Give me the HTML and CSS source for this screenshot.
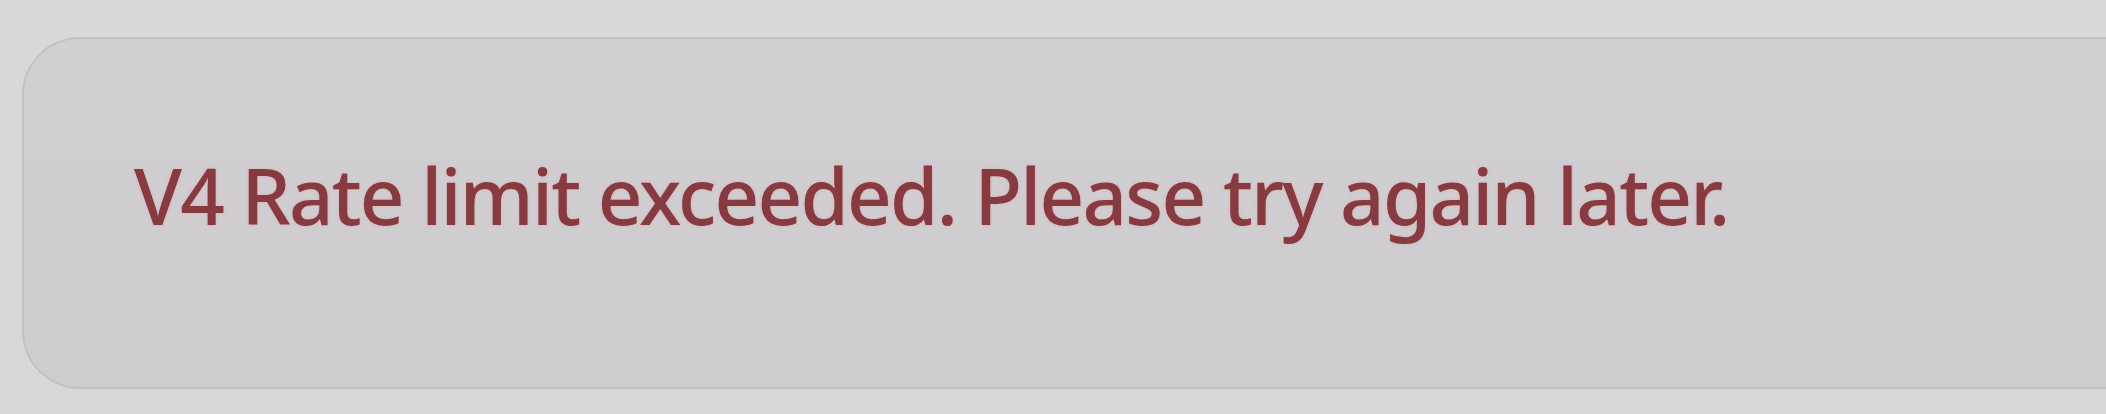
FILE: index.html
```html
<!DOCTYPE html>
<html>
<head>
<meta charset="utf-8">
<link rel="stylesheet" href="styles.css">
</head>
<body>
<div class="page">
  <div class="alert">
    <p class="alert-text">V4 Rate limit exceeded. Please try again later.</p>
  </div>
</div>
</body>
</html>
```

FILE: styles.css
```css
html, body {
  margin: 0;
  padding: 0;
  width: 2106px;
  height: 414px;
  overflow: hidden;
  background: #d7d9d9;
}
.page {
  padding: 37px 0 0 22px;
  display: flex;
}
.alert {
  flex: 1;
  margin-right: -80px;
  height: 352px;
  box-sizing: border-box;
  border: 2px solid #c4c1c3;
  border-radius: 58px;
  background: linear-gradient(180deg, #d1cfd1 0%, #cfcccf 100%);
  padding: 0 0 0 110px;
  display: flex;
  align-items: flex-start;
}
.alert-text {
  margin: 0;
  padding-top: 101px;
  font-family: "Noto Sans", "Open Sans", sans-serif;
  font-weight: 500;
  font-size: 78px;
  line-height: 110px;
  color: #873a40;
  letter-spacing: -1.8px;
  text-shadow: 0 0 3px rgba(225, 150, 155, 0.55);
}
```
